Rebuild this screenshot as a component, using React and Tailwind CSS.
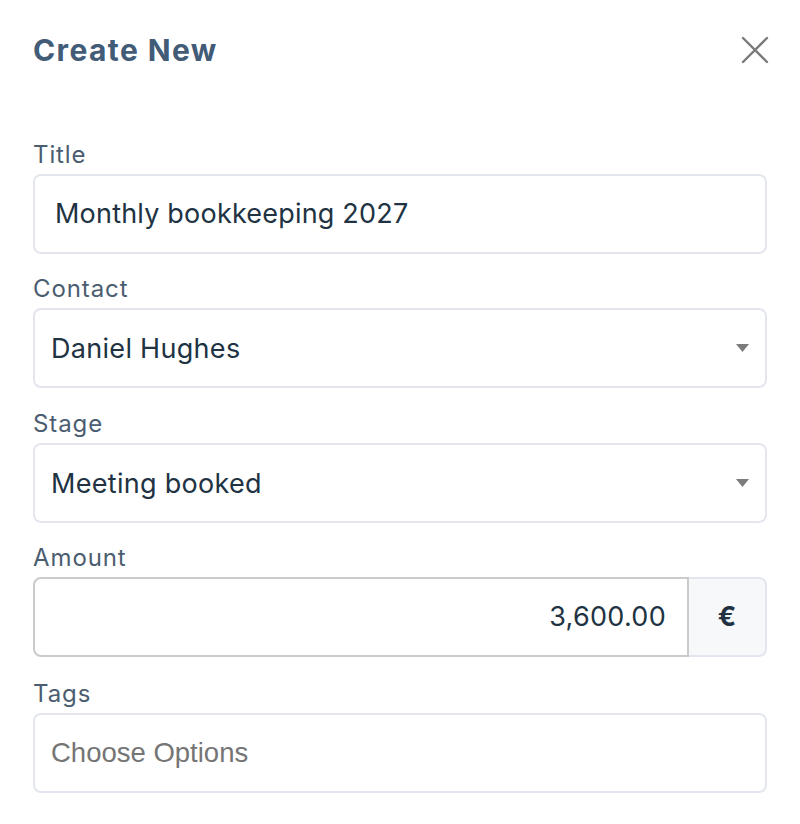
import React from "react";

const font = { fontFamily: "Inter, 'Noto Sans', sans-serif" };

function Label({ children }) {
  return (
    <div className="h-[34px] text-[24px] leading-[30px] tracking-[0.9px] text-[#4b5d70]">{children}</div>
  );
}

function Caret() {
  return (
    <svg width="13" height="8" viewBox="0 0 13 8" className="shrink-0">
      <path d="M0 0 L13 0 L6.5 8 Z" fill="#7c7c7c" />
    </svg>
  );
}

function Select({ value }) {
  return (
    <div className="h-[80px] rounded-[8px] border-2 border-[#e3e6ef] flex items-center pl-[16px] pr-[16px] bg-white">
      <span className="flex-1 text-[27px] tracking-[0.3px] text-[#213343] pt-[2px]">{value}</span>
      <Caret />
    </div>
  );
}

export default function App() {
  return (
    <div className="w-[800px] h-[824px] bg-white px-[33px]" style={font}>
      <div className="h-[140px] pt-[28px]">
        <div className="flex items-center justify-between h-[44px]">
          <h1 className="text-[30px] font-bold text-[#425b76] tracking-[1.4px]">Create New</h1>
          <svg width="28" height="28" viewBox="0 0 28 28" className="mr-[-2px]">
            <path d="M2 2 L26 26 M26 2 L2 26" stroke="#7a7a7a" strokeWidth="2.4" strokeLinecap="round" />
          </svg>
        </div>
      </div>

      <div className="flex flex-col">
        <div>
          <Label>Title</Label>
          <div className="h-[80px] rounded-[8px] border-2 border-[#e3e6ef] flex items-center pl-[20px] bg-white">
            <span className="text-[27px] tracking-[0.2px] text-[#213343]">Monthly bookkeeping 2027</span>
          </div>
        </div>

        <div className="mt-[20px]">
          <Label>Contact</Label>
          <Select value="Daniel Hughes" />
        </div>

        <div className="mt-[21px]">
          <Label>Stage</Label>
          <Select value="Meeting booked" />
        </div>

        <div className="mt-[20px]">
          <Label>Amount</Label>
          <div className="h-[80px] flex">
            <div className="flex-1 rounded-l-[8px] border-2 border-[#cbcbcb] flex items-center justify-end pr-[21px] bg-white">
              <span className="text-[27px] tracking-[0.3px] text-[#213343]">3,600.00</span>
            </div>
            <div className="w-[78px] rounded-r-[8px] border-2 border-l-0 border-[#e3e6ef] bg-[#f6f8fa] flex items-center justify-center">
              <span className="text-[27px] font-bold text-[#213343]">€</span>
            </div>
          </div>
        </div>

        <div className="mt-[22px]">
          <Label>Tags</Label>
          <div className="h-[80px] rounded-[8px] border-2 border-[#e3e6ef] flex items-center pl-[16px] bg-white">
            <span className="text-[27.5px] text-[#757575]" style={{ fontFamily: "'Liberation Sans', Arial, sans-serif" }}>
              Choose Options
            </span>
          </div>
        </div>
      </div>
    </div>
  );
}
